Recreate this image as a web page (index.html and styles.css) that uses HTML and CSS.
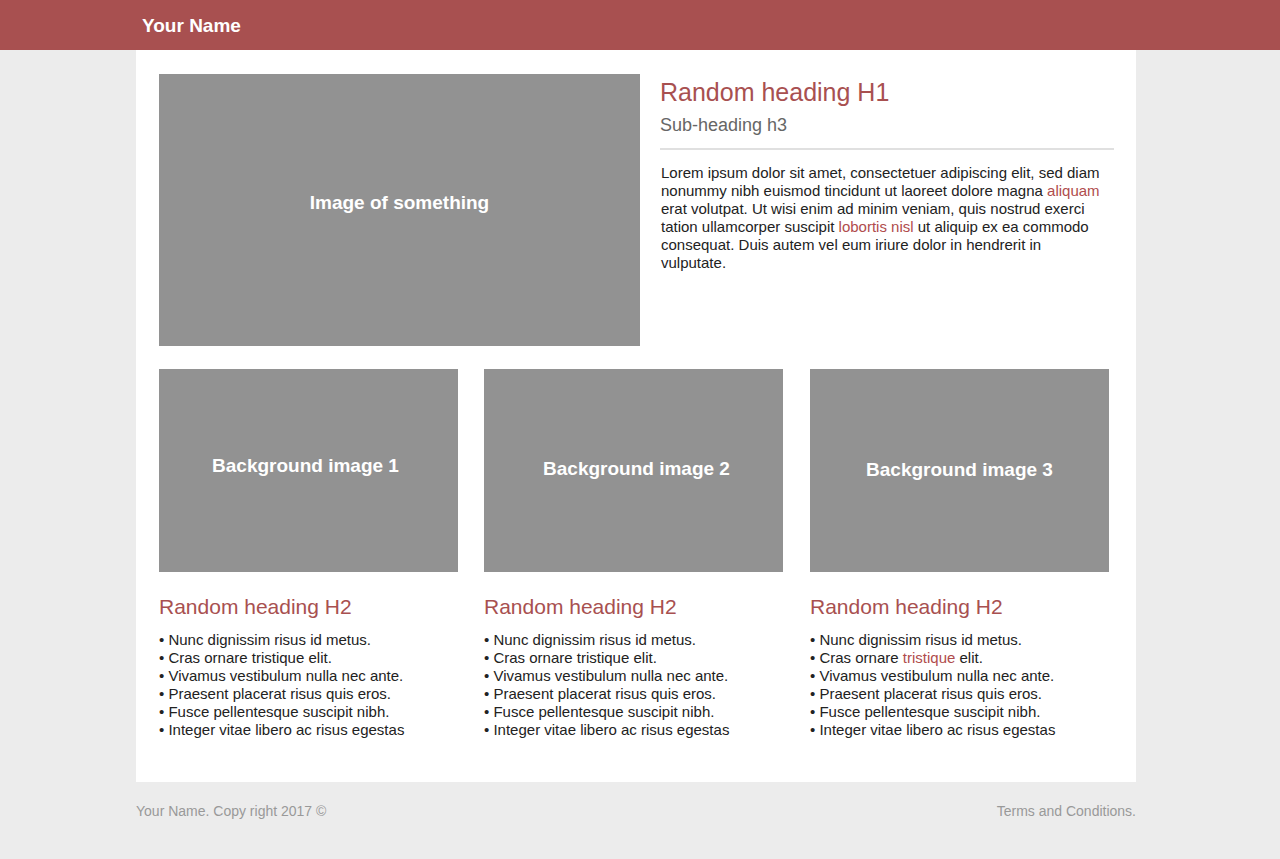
FILE: index.html
```html
<!DOCTYPE html>
<html>
<head>
<meta charset="utf-8">
<title>Your Name</title>
<link rel="stylesheet" href="styles.css">
</head>
<body>
<header class="topbar">
  <div class="topbar-inner">Your Name</div>
</header>
<main class="container">
  <section class="hero">
    <div class="placeholder hero-img">Image of something</div>
    <div class="hero-text">
      <h1>Random heading H1</h1>
      <h3>Sub-heading h3</h3>
      <hr>
      <p>Lorem ipsum dolor sit amet, consectetuer adipiscing elit, sed diam nonummy nibh euismod tincidunt ut laoreet dolore magna <a href="#">aliquam</a> erat volutpat. Ut wisi enim ad minim veniam, quis nostrud exerci tation ullamcorper suscipit <a href="#">lobortis nisl</a> ut aliquip ex ea commodo consequat. Duis autem vel eum iriure dolor in hendrerit in vulputate.</p>
    </div>
  </section>
  <section class="cards">
    <div class="card">
      <div class="placeholder card-img card-img-1">Background image 1</div>
      <h2>Random heading H2</h2>
      <ul>
        <li>Nunc dignissim risus id metus.</li>
        <li>Cras ornare tristique elit.</li>
        <li>Vivamus vestibulum nulla nec ante.</li>
        <li>Praesent placerat risus quis eros.</li>
        <li>Fusce pellentesque suscipit nibh.</li>
        <li>Integer vitae libero ac risus egestas</li>
      </ul>
    </div>
    <div class="card">
      <div class="placeholder card-img card-img-2">Background image 2</div>
      <h2>Random heading H2</h2>
      <ul>
        <li>Nunc dignissim risus id metus.</li>
        <li>Cras ornare tristique elit.</li>
        <li>Vivamus vestibulum nulla nec ante.</li>
        <li>Praesent placerat risus quis eros.</li>
        <li>Fusce pellentesque suscipit nibh.</li>
        <li>Integer vitae libero ac risus egestas</li>
      </ul>
    </div>
    <div class="card card-last">
      <div class="placeholder card-img card-img-3">Background image 3</div>
      <h2>Random heading H2</h2>
      <ul>
        <li>Nunc dignissim risus id metus.</li>
        <li>Cras ornare <a href="#">tristique</a> elit.</li>
        <li>Vivamus vestibulum nulla nec ante.</li>
        <li>Praesent placerat risus quis eros.</li>
        <li>Fusce pellentesque suscipit nibh.</li>
        <li>Integer vitae libero ac risus egestas</li>
      </ul>
    </div>
  </section>
</main>
<footer class="footer">
  <span>Your Name. Copy right 2017 ©</span>
  <span>Terms and Conditions.</span>
</footer>
</body>
</html>
```

FILE: styles.css
```css
html, body {
  margin: 0;
  padding: 0;
}
body {
  background: #ececec;
  font-family: "Liberation Sans", Arial, sans-serif;
  color: #222;
  padding-right: 8px;
}
a {
  color: #b04c4c;
  text-decoration: none;
}
.topbar {
  background: #a85050;
  height: 50px;
  margin-right: -8px;
}
.topbar-inner {
  width: 1000px;
  margin: 0 auto;
  box-sizing: border-box;
  padding-left: 6px;
  color: #fff;
  font-weight: bold;
  font-size: 19px;
  line-height: 51px;
  position: relative;
  left: -4px;
}
.container {
  width: 1000px;
  margin: 0 auto;
  box-sizing: border-box;
  background: #fff;
  padding: 24px 22px 43px 23px;
}
.placeholder {
  background: #929292;
  color: #fff;
  font-weight: bold;
  display: flex;
  align-items: center;
  justify-content: center;
}
.hero {
  display: flex;
  gap: 20px;
}
.hero-img {
  width: 481px;
  height: 272px;
  flex: none;
  font-size: 19px;
  padding-bottom: 14px;
  box-sizing: border-box;
}
.hero-text {
  width: 454px;
}
h1 {
  margin: 3px 0 0;
  font-weight: normal;
  font-size: 25px;
  line-height: 30px;
  color: #a85050;
}
h3 {
  margin: 7px 0 0;
  font-weight: normal;
  font-size: 18px;
  line-height: 22px;
  color: #666;
}
hr {
  margin: 12px 0 0;
  border: 0;
  height: 2px;
  background: #e0e0e0;
}
.hero-text p {
  margin: 14px 0 0 1px;
  width: 440px;
  font-size: 15px;
  line-height: 18px;
}
.cards {
  margin-top: 23px;
  display: flex;
  gap: 26px;
}
.card {
  width: 299px;
  flex: none;
}
.card-last {
  margin-left: 1px;
}
.card-img {
  height: 203px;
  font-size: 19px;
  box-sizing: border-box;
}
.card-img-1 {
  padding: 0 6px 10px 0;
}
.card-img-2 {
  padding: 0 0 4px 6px;
}
.card-img-3 {
  padding: 0 0 2px 0;
}
h2 {
  margin: 22px 0 0;
  font-weight: normal;
  font-size: 21px;
  line-height: 26px;
  color: #a85050;
}
ul {
  list-style: none;
  margin: 11px 0 0;
  padding: 0;
  font-size: 15px;
  line-height: 18px;
}
li::before {
  content: "• ";
}
.footer {
  width: 1000px;
  margin: 0 auto;
  display: flex;
  justify-content: space-between;
  padding-top: 20px;
  font-size: 14px;
  line-height: 18px;
  color: #999;
}
```
